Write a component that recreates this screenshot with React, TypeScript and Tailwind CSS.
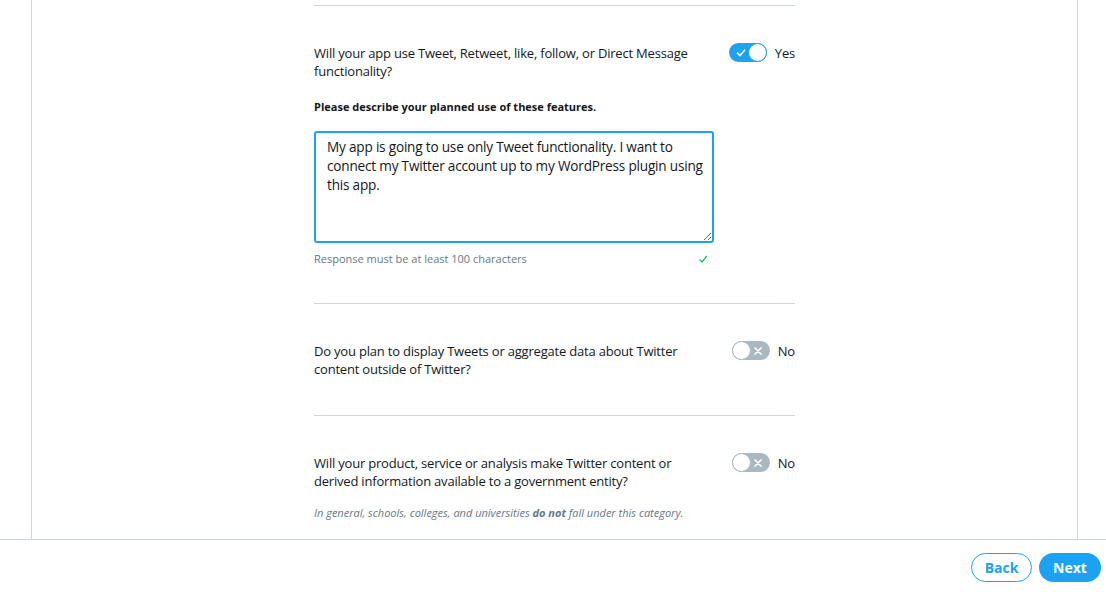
import React, { useState } from 'react';

const font = { fontFamily: '"Open Sans", "Noto Sans", sans-serif' };

interface ToggleProps {
  on: boolean;
  onChange: () => void;
}

const Toggle: React.FC<ToggleProps> = ({ on, onChange }) => (
  <button
    onClick={onChange}
    className={`relative flex items-center w-[38px] h-[19px] rounded-full shrink-0 ${on ? 'bg-[#1da1f2]' : 'bg-[#aab8c2]'}`}
  >
    {on ? (
      <>
        <svg width="10" height="10" viewBox="0 0 10 10" className="absolute left-[7px] top-[5px]">
          <path d="M1.5 5.2 L4 7.6 L8.6 2.2" stroke="white" strokeWidth="1.6" fill="none" strokeLinecap="round" strokeLinejoin="round" />
        </svg>
        <span className="absolute right-0 top-0 w-[19px] h-[19px] rounded-full bg-white border border-[#1da1f2]" />
      </>
    ) : (
      <>
        <span className="absolute left-0 top-0 w-[19px] h-[19px] rounded-full bg-white border border-[#aab8c2]" />
        <svg width="10" height="10" viewBox="0 0 10 10" className="absolute right-[7px] top-[5px]">
          <path d="M2 2 L8 8 M8 2 L2 8" stroke="white" strokeWidth="1.7" strokeLinecap="round" />
        </svg>
      </>
    )}
  </button>
);

interface QuestionProps {
  text: string;
  on: boolean;
  onChange: () => void;
}

const Question: React.FC<QuestionProps> = ({ text, on, onChange }) => (
  <div className="flex justify-between items-start">
    <p className="w-[400px] text-[13px] leading-[18px] tracking-[-0.2px] text-[#14171a]">{text}</p>
    <div className="flex items-center gap-[8px] -mt-[1px]">
      <Toggle on={on} onChange={onChange} />
      <span className="text-[13px] leading-[18px] tracking-[-0.2px] text-[#14171a]">{on ? 'Yes' : 'No'}</span>
    </div>
  </div>
);

export default function App() {
  const [useTweets, setUseTweets] = useState(true);
  const [display, setDisplay] = useState(false);
  const [gov, setGov] = useState(false);
  const [desc, setDesc] = useState(
    'My app is going to use only Tweet functionality. I want to connect my Twitter account up to my WordPress plugin using this app.'
  );

  return (
    <div className="h-[595px] flex flex-col bg-white overflow-hidden" style={font}>
      <div className="flex-1 min-h-0 pl-[31px] pr-[28px]">
        <div className="h-full border-x border-[#ccd6dd]">
          <div className="w-[481px] pt-[5px] ml-[282px]">
            <section className="border-t border-[#ccd6dd] pt-[38px] pb-[37px]">
              <Question
                text="Will your app use Tweet, Retweet, like, follow, or Direct Message functionality?"
                on={useTweets}
                onChange={() => setUseTweets(!useTweets)}
              />
              <p className="mt-[20px] text-[11px] leading-[14px] font-bold text-[#14171a]">
                Please describe your planned use of these features.
              </p>
              <textarea
                value={desc}
                onChange={(e) => setDesc(e.target.value)}
                className="mt-[17px] block w-[400px] h-[112px] border-2 border-[#1da1f2] rounded-[3px] pl-[11px] pr-[2px] py-[4px] text-[13.6px] leading-[19px] tracking-[-0.2px] text-[#14171a] outline-none resize"
                style={font}
              />
              <div className="mt-[9px] w-[400px] flex justify-between items-center text-[11px] leading-[14px] text-[#657786]">
                <span>Response must be at least 100 characters</span>
                <svg width="10" height="10" viewBox="0 0 10 10" className="mr-[6px]">
                  <path d="M1.5 5.5 L4 8 L8.8 2" stroke="#17bf63" strokeWidth="1.3" fill="none" />
                </svg>
              </div>
            </section>

            <section className="border-t border-[#ccd6dd] pt-[38px] pb-[37px]">
              <Question
                text="Do you plan to display Tweets or aggregate data about Twitter content outside of Twitter?"
                on={display}
                onChange={() => setDisplay(!display)}
              />
            </section>

            <section className="border-t border-[#ccd6dd] pt-[38px]">
              <Question
                text="Will your product, service or analysis make Twitter content or derived information available to a government entity?"
                on={gov}
                onChange={() => setGov(!gov)}
              />
              <p className="mt-[16px] text-[11px] leading-[14px] italic text-[#657786]">
                In general, schools, colleges, and universities <b>do not</b> fall under this category.
              </p>
            </section>
          </div>
        </div>
      </div>

      <footer className="h-[56px] shrink-0 border-t border-[#ccd6dd] flex items-center justify-end gap-[7px] pr-[5px]">
        <button className="w-[61px] h-[29px] rounded-full border border-[#1da1f2] text-[#1da1f2] text-[14px] font-bold">
          Back
        </button>
        <button className="w-[62px] h-[29px] rounded-full bg-[#1da1f2] text-white text-[14px] font-bold">
          Next
        </button>
      </footer>
    </div>
  );
}
